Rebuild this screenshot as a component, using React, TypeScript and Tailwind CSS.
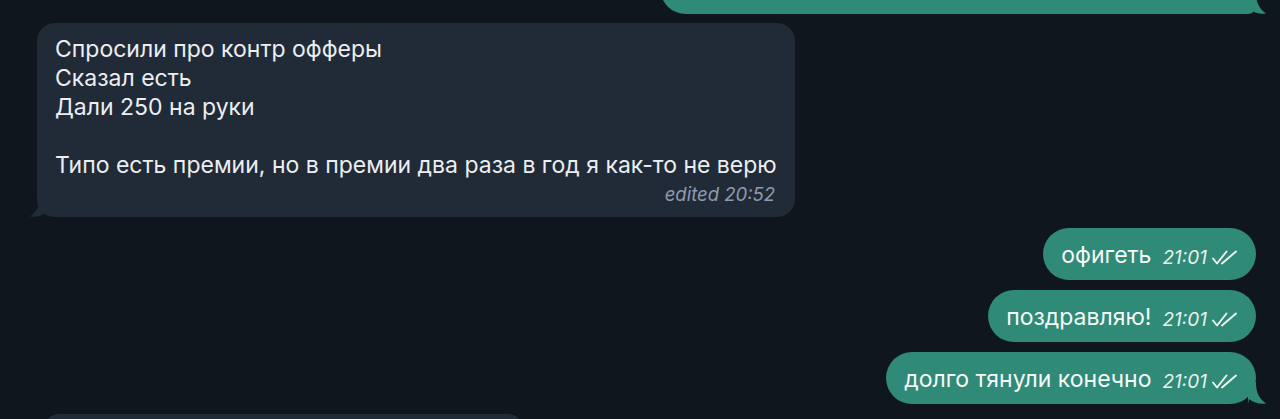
const Ticks = () => (
  <svg width="27" height="15" viewBox="0 0 27 15" fill="none" stroke="currentColor" strokeWidth="1.9" strokeLinecap="round" strokeLinejoin="round" className="block">
    <path d="M2 8.5 L6 13.5 L15.5 1.5" />
    <path d="M11 13.5 L25 1.5" />
  </svg>
);

const OutTail = ({ color }: { color: string }) => (
  <svg width="20" height="22" viewBox="0 0 20 22" className="absolute right-[-12px] bottom-0" fill={color}>
    <path d="M0 0 L8 0 C8 9 10 16 18 21.5 C12 22.5 6 21 1 17 L0 22 Z" />
  </svg>
);

const InTail = ({ color }: { color: string }) => (
  <svg width="20" height="22" viewBox="0 0 20 22" className="absolute left-[-9px] bottom-0" fill={color}>
    <path d="M20 0 L12 0 C12 9 10 16 2 21.5 C8 22.5 14 21 19 17 L20 22 Z" />
  </svg>
);

const Outgoing = ({ text, tail = false }: { text: string; tail?: boolean }) => (
  <div className="relative self-end flex items-center rounded-[26px] bg-[#2f8a77] pl-[18px] pr-[18px] h-[52px] text-[#f6f9f8]">
    <span className="text-[23px] leading-[29px] mt-[3px]">{text}</span>
    <span className="ml-[11px] text-[19px] italic leading-[29px] text-[#e8f2ef] mt-[6px]">21:01</span>
    <span className="ml-[4px] mt-[7px] text-[#f0f6f4]">
      <Ticks />
    </span>
    {tail && <OutTail color="#2f8a77" />}
  </div>
);

export default function App() {
  return (
    <div className="h-[419px] w-[1280px] overflow-hidden bg-[#10161d] font-['Inter','Noto_Sans',sans-serif] text-[#eceef1]">
      <div className="flex flex-col pl-[37px] pr-[24px]">
        <div className="relative self-end mt-[-38px] w-[596px] h-[52px] rounded-[26px] rounded-br-[8px] bg-[#2f8a77]">
          <OutTail color="#2f8a77" />
        </div>

        <div className="relative mt-[9px] self-start w-[758px] rounded-[18px] bg-[#212b38] px-[18px] pt-[12px] pb-[8px]">
          <div className="text-[23px] leading-[29px] text-[#eceef1]">
            <div>Спросили про контр офферы</div>
            <div>Сказал есть</div>
            <div>Дали 250 на руки</div>
            <div>&nbsp;</div>
            <div>Типо есть премии, но в премии два раза в год я как-то не верю</div>
          </div>
          <div className="text-right text-[18.5px] italic leading-[29px] text-[#8d9bae] pr-[2px]">edited 20:52</div>
          <InTail color="#212b38" />
        </div>

        <div className="mt-[11px] flex flex-col gap-[10px]">
          <Outgoing text="офигеть" />
          <Outgoing text="поздравляю!" />
          <Outgoing text="долго тянули конечно" tail />
        </div>

        <div className="mt-[10px] ml-[5px] self-start w-[483px] h-[52px] rounded-[18px] bg-[#212b38]" />
      </div>
    </div>
  );
}
